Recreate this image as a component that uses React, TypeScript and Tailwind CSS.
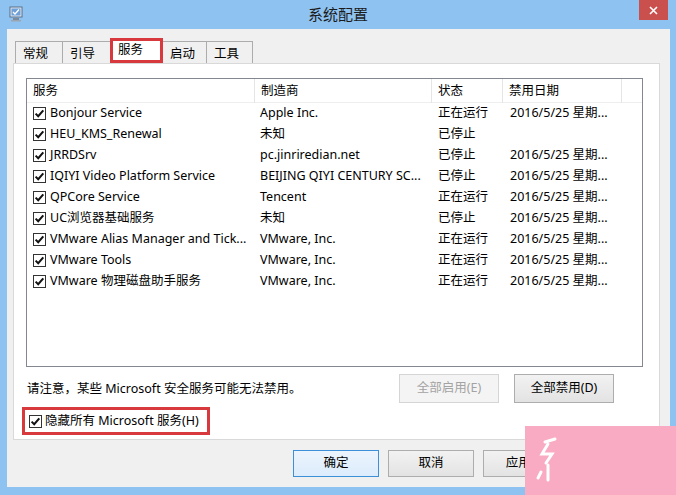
import React from "react"

const rows = [
  { name: "Bonjour Service", maker: "Apple Inc.", status: "正在运行", date: "2016/5/25 星期..." },
  { name: "HEU_KMS_Renewal", maker: "未知", status: "已停止", date: "" },
  { name: "JRRDSrv", maker: "pc.jinriredian.net", status: "已停止", date: "2016/5/25 星期..." },
  { name: "IQIYI Video Platform Service", maker: "BEIJING QIYI CENTURY SC...", status: "已停止", date: "2016/5/25 星期..." },
  { name: "QPCore Service", maker: "Tencent", status: "正在运行", date: "2016/5/25 星期..." },
  { name: "UC浏览器基础服务", maker: "未知", status: "已停止", date: "2016/5/25 星期..." },
  { name: "VMware Alias Manager and Tick...", maker: "VMware, Inc.", status: "正在运行", date: "2016/5/25 星期..." },
  { name: "VMware Tools", maker: "VMware, Inc.", status: "正在运行", date: "2016/5/25 星期..." },
  { name: "VMware 物理磁盘助手服务", maker: "VMware, Inc.", status: "正在运行", date: "2016/5/25 星期..." },
]

function CheckBox() {
  return (
    <svg width="13" height="13" viewBox="0 0 13 13" className="shrink-0">
      <rect x="0.5" y="0.5" width="12" height="12" fill="#fff" stroke="#333" />
      <path d="M2.6 6.6 L5.2 9.2 L10.3 3.4" fill="none" stroke="#111" strokeWidth="2" />
    </svg>
  )
}

function AppIcon() {
  return (
    <svg width="14" height="16" viewBox="0 0 14 16">
      <rect x="1" y="1" width="12" height="10" fill="#dfe9f5" stroke="#5a6f88" />
      <rect x="2.5" y="2.5" width="9" height="7" fill="#6fa0d8" />
      <path d="M4 6 L6 8 L10 3.5" fill="none" stroke="#fff" strokeWidth="1.3" />
      <rect x="4" y="12" width="6" height="2" fill="#7c8a99" />
      <rect x="2" y="14" width="10" height="1.5" fill="#9aa6b3" />
    </svg>
  )
}

const tabs = [
  { label: "常规", w: "w-[48px]" },
  { label: "引导", w: "w-[49px]" },
  { label: "服务", w: "w-[53px]", active: true },
  { label: "启动", w: "w-[45px]" },
  { label: "工具", w: "w-[47px]" },
]

export default function App() {
  return (
    <div className="relative w-[676px] h-[495px] overflow-hidden bg-[#8ec3f1] flex flex-col text-[12.5px] text-black font-['Noto_Sans','Noto_Sans_CJK_SC',sans-serif]">
      {/* title bar */}
      <div className="h-[29px] grid grid-cols-[1fr_auto_1fr] shrink-0">
        <div className="pl-[9px] pt-[6px]">
          <AppIcon />
        </div>
        <div className="pt-[3px] text-[15px] text-[#1b1b1b]">系统配置</div>
        <div className="flex justify-end pr-[8px]">
          <div className="w-[29px] h-[20px] bg-[#c9504d] flex items-center justify-center">
            <svg width="9" height="9" viewBox="0 0 9 9">
              <path d="M1 1 L8 8 M8 1 L1 8" stroke="#fff" strokeWidth="1.6" />
            </svg>
          </div>
        </div>
      </div>

      {/* client */}
      <div className="ml-[7px] mr-[6px] mb-[8px] flex-1 bg-[#f0f0f0] pl-[6px] pt-[9px] flex flex-col">
        {/* tabs */}
        <div className="h-[25px] flex items-end pl-[2px]">
          {tabs.map((t, i) =>
            t.active ? (
              <div
                key={t.label}
                className={`${t.w} h-[25px] -ml-px bg-white border-[3px] border-[#d8393d] pl-[5px] leading-[17px] relative z-10`}
              >
                {t.label}
              </div>
            ) : (
              <div
                key={t.label}
                className={`${t.w} h-[22px] ${i === 0 ? "" : "-ml-px"} border border-b-0 border-[#acacac] bg-[#f0f0f0] pl-[7px] pt-[3px] leading-[18px]`}
              >
                {t.label}
              </div>
            )
          )}
        </div>

        {/* panel */}
        <div className="w-[647px] h-[377px] bg-white border border-[#d9d9d9] pl-[12px] pt-[14px] flex flex-col">
          {/* list view */}
          <div className="w-[617px] h-[289px] border border-[#828790] bg-white">
            <div className="h-[24px] grid grid-cols-[228px_177px_71px_119px_1fr] border-b border-[#eeeeee]">
              {["服务", "制造商", "状态", "禁用日期", ""].map((h, i) => (
                <div
                  key={i}
                  className={`pl-[6px] leading-[24px] ${i < 4 ? "border-r border-[#e5e5e5]" : ""}`}
                >
                  {h}
                </div>
              ))}
            </div>
            {rows.map((r) => (
              <div key={r.name} className="h-[21px] grid grid-cols-[228px_177px_71px_119px_1fr] items-center">
                <div className="pl-[6px] flex items-center gap-[4px] whitespace-nowrap overflow-hidden">
                  <CheckBox />
                  <span>{r.name}</span>
                </div>
                <div className="pl-[5px] whitespace-nowrap overflow-hidden">{r.maker}</div>
                <div className="pl-[6px] whitespace-nowrap">{r.status}</div>
                <div className="pl-[7px] whitespace-nowrap overflow-hidden">{r.date}</div>
                <div />
              </div>
            ))}
          </div>

          {/* note + buttons */}
          <div className="w-[617px] mt-[7px] h-[29px] flex items-center pl-[1px] pr-[29px]">
            <div className="flex-1 pt-[2px]">请注意，某些 Microsoft 安全服务可能无法禁用。</div>
            <div className="flex gap-[15px]">
              <div className="w-[100px] h-[29px] border border-[#d5d5d5] bg-[#f4f4f4] text-[#a3a3a3] flex items-center justify-center">
                全部启用(E)
              </div>
              <div className="w-[100px] h-[29px] border border-[#adadad] bg-gradient-to-b from-[#f2f2f2] to-[#e3e3e3] flex items-center justify-center">
                全部禁用(D)
              </div>
            </div>
          </div>

          {/* hide ms services */}
          <div className="mt-[4px] -ml-[4px] w-[188px] h-[28px] border-[3px] border-[#d8393d] flex items-center pl-[4px] gap-[3px]">
            <CheckBox />
            <span>隐藏所有 Microsoft 服务(H)</span>
          </div>
        </div>

        {/* dialog buttons */}
        <div className="mt-[10px] flex justify-end gap-[9px] pr-[6px]">
          <div className="w-[86px] h-[27px] border border-[#3c8fd9] bg-gradient-to-b from-[#ecf4fc] to-[#dcecfc] flex items-center justify-center">
            确定
          </div>
          {["取消", "应用(A)", "帮助"].map((b) => (
            <div
              key={b}
              className="w-[86px] h-[27px] border border-[#adadad] bg-gradient-to-b from-[#f2f2f2] to-[#e3e3e3] flex items-center justify-center"
            >
              {b}
            </div>
          ))}
        </div>
      </div>

      {/* pink watermark block */}
      <div className="absolute left-[525px] top-[426px] right-0 bottom-0 bg-[#f8abc3]">
        <svg width="40" height="69" viewBox="0 0 40 69" className="absolute left-[6px] top-[8px]">
          <path d="M14 8 L24 5 M17 10 L11 20 L21 20 L15 29 M17 31 L17 46 M10 38 L7 44" fill="none" stroke="#fff" strokeWidth="3" strokeLinecap="round" />
        </svg>
      </div>
    </div>
  )
}
